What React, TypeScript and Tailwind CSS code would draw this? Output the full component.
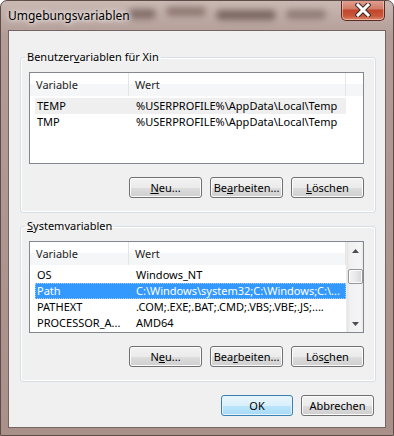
import React from 'react';

const font = "font-['Noto_Sans',sans-serif]";

function Btn({ children, primary }: { children: React.ReactNode; primary?: boolean }) {
  return (
    <button
      className={`h-[21px] rounded-[3px] border text-[11px] leading-none text-black flex items-center justify-center ${
        primary
          ? 'w-[72px] border-[#3c7fb1] bg-[linear-gradient(#eaf6fd_0%,#d9f0fc_50%,#bee6fd_50%,#a7d9f5_100%)] shadow-[inset_0_0_0_1px_#e4f4fc]'
          : 'w-[73px] border-[#707070] bg-[linear-gradient(#f2f2f2_0%,#ebebeb_50%,#dddddd_50%,#cfcfcf_100%)] shadow-[inset_0_0_0_1px_#fcfcfc]'
      }`}
    >
      {children}
    </button>
  );
}

type Row = { name: string; value: string; state?: 'gray' | 'sel' };

function Header({ full }: { full?: boolean }) {
  return (
    <div className="flex h-[23px] bg-[linear-gradient(#ffffff_0%,#ffffff_50%,#f5f6f7_50%,#f5f6f7_100%)] text-[#1e1e1e]">
      <div className="w-[99px] shrink-0 border-r border-[#e5e5e5] pl-[6px] flex items-center">Variable</div>
      <div className="w-[217px] shrink-0 border-r border-[#e5e5e5] pl-[6px] flex items-center">Wert</div>
      {full && <div className="flex-1" />}
    </div>
  );
}

function RowLine({ r }: { r: Row }) {
  const bg =
    r.state === 'sel'
      ? 'bg-[#3399ff] text-white border border-dotted border-[#a8d0f8]'
      : r.state === 'gray'
      ? 'bg-[#efefef] text-black border border-transparent'
      : 'text-black border border-transparent';
  return (
    <div className="flex h-[16px] items-center">
      <div className={`ml-[5px] w-[311px] h-[16px] flex items-center whitespace-nowrap overflow-hidden ${bg}`}>
        <div className="w-[95px] shrink-0 pl-[1px]">{r.name}</div>
        <div className="pl-[5px]">{r.value}</div>
      </div>
    </div>
  );
}

function Scrollbar() {
  return (
    <div className="w-[17px] h-full bg-[linear-gradient(90deg,#e3e3e3_0%,#f0f0f0_15%,#f5f5f5_85%,#e8e8e8_100%)] border-l border-[#ececec] flex flex-col items-center">
      <div className="h-[17px] w-full flex items-center justify-center">
        <svg width="7" height="4" viewBox="0 0 7 4"><path d="M0 4 L3.5 0 L7 4 Z" fill="#4d4d4d" /></svg>
      </div>
      <div className="mt-[10px] w-[15px] h-[15px] rounded-[2px] border border-[#979797] bg-[linear-gradient(90deg,#f3f3f3_0%,#e8e8e8_50%,#d6d6d6_100%)] shadow-[inset_0_0_0_1px_#fbfbfb]" />
      <div className="flex-1" />
      <div className="h-[17px] w-full flex items-center justify-center">
        <svg width="7" height="4" viewBox="0 0 7 4"><path d="M0 0 L3.5 4 L7 0 Z" fill="#4d4d4d" /></svg>
      </div>
    </div>
  );
}

function ListView({ rows, scroll }: { rows: Row[]; scroll?: boolean }) {
  return (
    <div className="ml-[8px] w-[335px] h-[92px] border border-[#828790] bg-white flex text-[11px] leading-[16px]">
      <div className="flex-1 flex flex-col min-w-0">
        <Header full={!scroll} />
        <div className="pt-[2px] flex flex-col">
          {rows.map((r) => (
            <RowLine key={r.name} r={r} />
          ))}
        </div>
      </div>
      {scroll && <Scrollbar />}
    </div>
  );
}

function Group({
  legend,
  rows,
  scroll,
  btns,
  className,
}: {
  legend: React.ReactNode;
  rows: Row[];
  scroll?: boolean;
  btns: React.ReactNode[];
  className: string;
}) {
  return (
    <fieldset
      className={`ml-[11px] w-[356px] rounded-[3px] border border-[#d5dfe5] shadow-[inset_0_0_0_1px_#ffffff] pb-[14px] ${className}`}
    >
      <legend className="ml-[4px] px-[2px] text-[11px] leading-[16px] text-black">{legend}</legend>
      <div className="mt-[7px]">
        <ListView rows={rows} scroll={scroll} />
      </div>
      <div className="mt-[13px] ml-[8px] w-[335px] flex justify-end gap-[8px]">
        {btns.map((b, i) => (
          <Btn key={i}>{b}</Btn>
        ))}
      </div>
    </fieldset>
  );
}

export default function App() {
  return (
    <div
      className={`${font} w-[394px] h-[436px] rounded-t-[7px] border border-[#5e4c48] bg-[linear-gradient(#c9b8b3_0%,#b29c96_8%,#a99089_100%)] px-[7px] pb-[7px] flex flex-col overflow-hidden relative`}
    >
      {/* title bar */}
      <div className="h-[29px] flex items-start justify-between relative">
        <div className="absolute left-[120px] top-[4px] w-[210px] h-[18px] flex gap-[10px] blur-[3px] opacity-70 pointer-events-none">
          <div className="w-[28px] h-[10px] mt-[4px] rounded-full bg-[#6b5550]" />
          <div className="w-[40px] h-[9px] mt-[2px] rounded-full bg-[#7a615b]" />
          <div className="w-[60px] h-[10px] mt-[5px] rounded-full bg-[#5f4b46]" />
          <div className="w-[40px] h-[9px] mt-[5px] rounded-full bg-[#7b6660]" />
        </div>
        <div className="relative mt-[6px] text-[12px] leading-[18px] text-black [text-shadow:0_0_8px_#ffffff,0_0_4px_#ffffff]">
          Umgebungsvariablen
        </div>
        <div className="relative -mt-[1px] mr-[1px] w-[44px] h-[21px] rounded-b-[5px] border border-[#5c2a22] border-t-0 bg-[linear-gradient(#e2a394_0%,#d27a66_45%,#c2462b_50%,#c9573b_80%,#dc8a6e_100%)] shadow-[inset_0_0_0_1px_rgba(255,220,210,0.5)] flex items-center justify-center">
          <svg width="16" height="14" viewBox="0 0 16 14">
            <path d="M3 2 L13 12 M13 2 L3 12" stroke="#3a2a28" strokeWidth="5" strokeLinecap="square" />
            <path d="M3 2 L13 12 M13 2 L3 12" stroke="#ffffff" strokeWidth="3" strokeLinecap="square" />
          </svg>
        </div>
      </div>
      {/* client */}
      <div className="flex-1 border border-[#756562] bg-[#f0f0f0] flex flex-col">
        <Group
          className="mt-[18px]"
          legend={
            <>
              Benutzer<u>v</u>ariablen für Xin
            </>
          }
          rows={[
            { name: 'TEMP', value: '%USERPROFILE%\\AppData\\Local\\Temp', state: 'gray' },
            { name: 'TMP', value: '%USERPROFILE%\\AppData\\Local\\Temp' },
          ]}
          btns={[
            <><u>N</u>eu...</>,
            <>Be<u>a</u>rbeiten...</>,
            <><u>L</u>öschen</>,
          ]}
        />
        <Group
          className="mt-[5px]"
          legend={
            <>
              <u>S</u>ystemvariablen
            </>
          }
          scroll
          rows={[
            { name: 'OS', value: 'Windows_NT' },
            { name: 'Path', value: 'C:\\Windows\\system32;C:\\Windows;C:\\...', state: 'sel' },
            { name: 'PATHEXT', value: '.COM;.EXE;.BAT;.CMD;.VBS;.VBE;.JS;....' },
            { name: 'PROCESSOR_A...', value: 'AMD64' },
          ]}
          btns={[
            <>N<u>e</u>u...</>,
            <>Bea<u>r</u>beiten...</>,
            <>Lös<u>c</u>hen</>,
          ]}
        />
        <div className="mt-[13px] mr-[11px] flex justify-end gap-[8px]">
          <Btn primary>OK</Btn>
          <Btn>Abbrechen</Btn>
        </div>
      </div>
    </div>
  );
}
